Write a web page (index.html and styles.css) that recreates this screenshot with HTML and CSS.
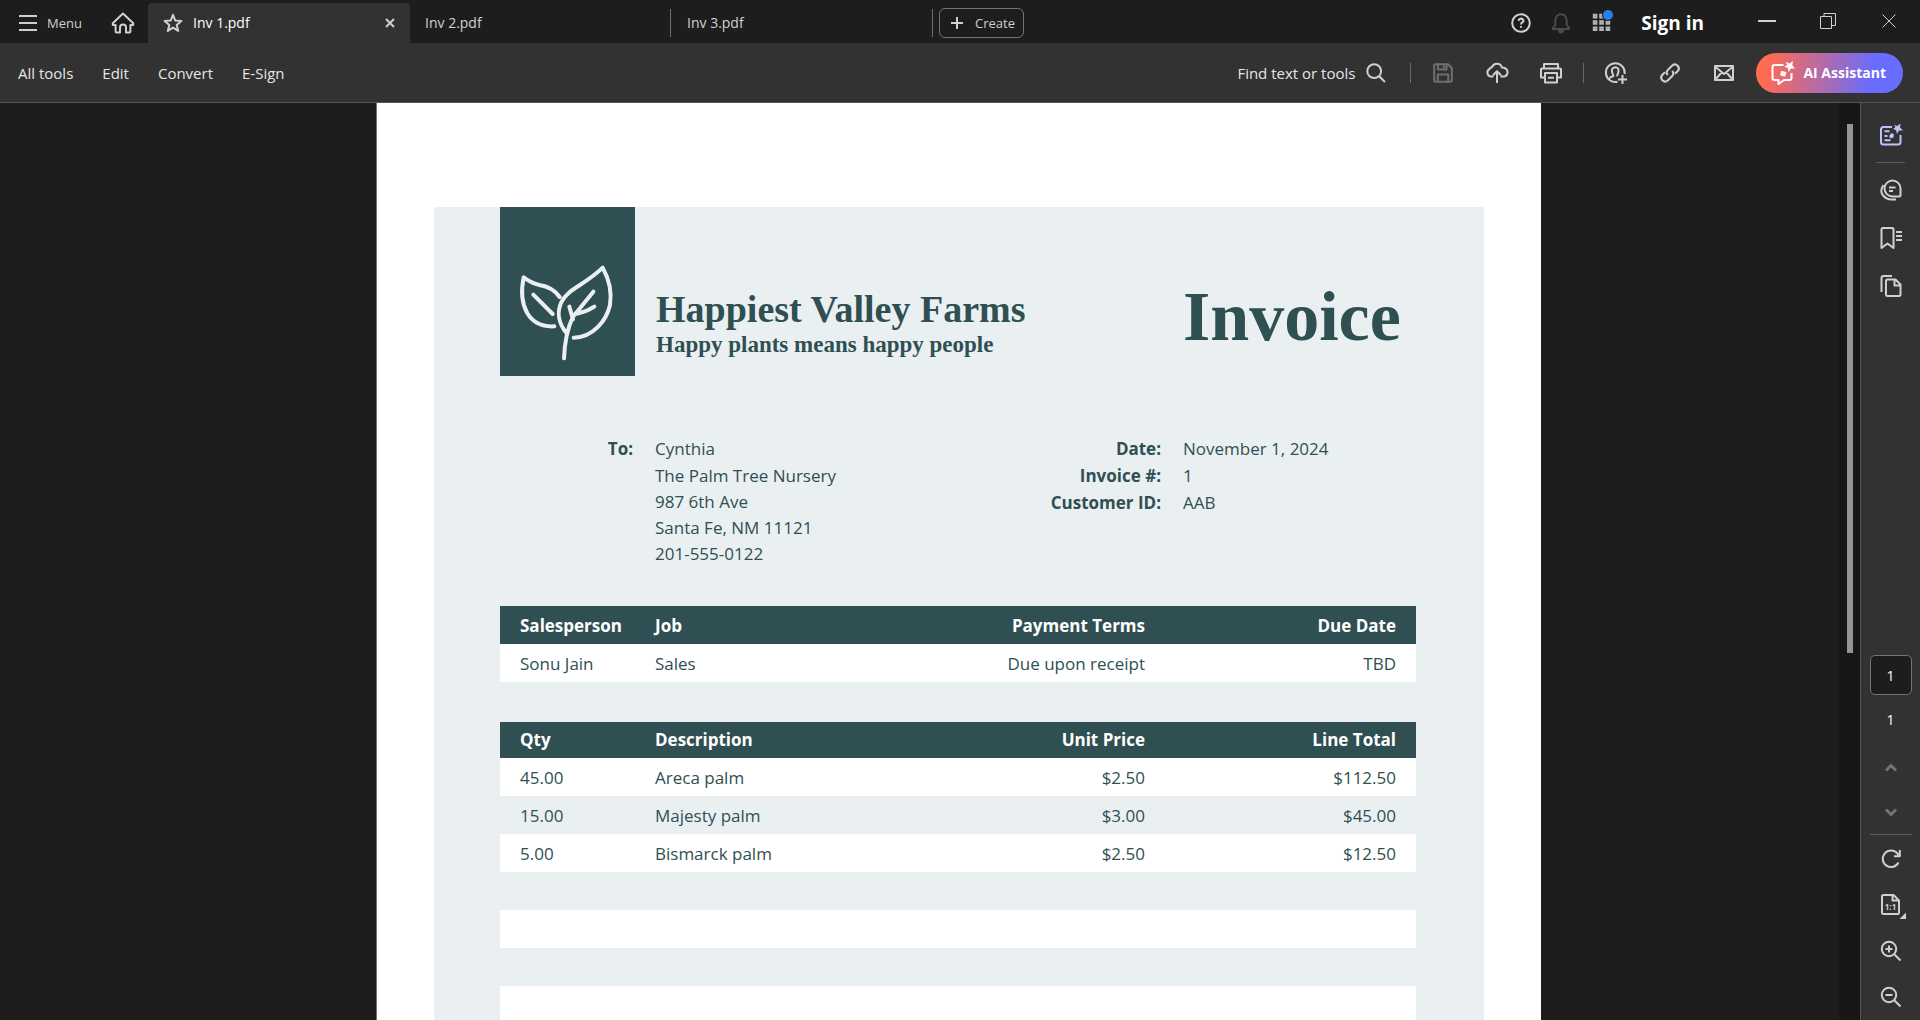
FILE: index.html
```html
<!DOCTYPE html>
<html lang="en">
<head>
<meta charset="utf-8">
<meta name="viewport" content="width=device-width, initial-scale=1">
<title>Inv 1.pdf</title>
<link rel="stylesheet" href="styles.css">
</head>
<body>
<div class="app">
  <header class="titlebar">
    <button class="menu-btn" type="button">
      <svg class="menu-icon" width="18" height="18" viewBox="0 0 18 18"><path d="M0 2h18M0 9h18M0 16h18"/></svg>
      <span>Menu</span>
    </button>
    <button class="home-btn" type="button" aria-label="Home">
      <svg width="24" height="24" viewBox="0 0 24 24"><path d="M12 2.600 1.800 12.200V14H4.600V20.400Q4.600 21.400 5.600 21.400H9V16.600A3 3 0 0 1 15 16.600V21.400H18.400Q19.400 21.400 19.400 20.400V14H22.200V12.200Z"/></svg>
    </button>
    <nav class="tabs" aria-label="Open documents">
      <div class="tab tab-active">
        <button class="tab-star" type="button" aria-label="Star this file">
          <svg width="20" height="20" viewBox="0 0 20 20"><path d="M10 1.900 12.300 7.600 18.400 8 13.700 11.900 15.200 17.900 10 14.600 4.800 17.900 6.300 11.900 1.600 8 7.700 7.600Z"/></svg>
        </button>
        <button class="tab-name" type="button">Inv 1.pdf</button>
        <button class="tab-close" type="button" aria-label="Close tab">
          <svg width="10" height="10" viewBox="0 0 10 10"><path d="M1 1 9 9M9 1 1 9"/></svg>
        </button>
      </div>
      <div class="tab"><button class="tab-name" type="button">Inv 2.pdf</button></div>
      <div class="tab"><button class="tab-name" type="button">Inv 3.pdf</button></div>
    </nav>
    <button class="create-btn" type="button">
      <svg width="12" height="12" viewBox="0 0 12 12"><path d="M6 0V12M0 6H12"/></svg>
      <span>Create</span>
    </button>
    <div class="account">
      <button class="icon-btn" type="button" aria-label="Help">
        <svg width="20" height="20" viewBox="0 0 20 20"><circle cx="10" cy="10" r="8.800"/><path d="M7.800 7.900A2.300 2 0 1 1 11.200 9.400Q10 10.100 10 11.400M10 13.100V14.700"/></svg>
      </button>
      <button class="icon-btn dim" type="button" aria-label="Notifications">
        <svg width="20" height="22" viewBox="0 0 20 22"><path d="M10 1.500V2.500M2 17V16L4.300 13V8A5.700 5.700 0 0 1 15.700 8V13L18 16V17ZM8 18.500A2 2 0 0 0 12 18.500Z"/></svg>
      </button>
      <button class="icon-btn apps-btn" type="button" aria-label="Apps">
        <svg width="22" height="22" viewBox="0 0 22 22"><path d="M2.800 4.800h2.600v2.600H2.800zM9.200 4.800h2.600v2.600H9.200zM2.800 11.200h2.600v2.600H2.800zM9.200 11.200h2.600v2.600H9.200zM15.600 11.200h2.600v2.600H15.600zM2.800 17.400h2.600v2.600H2.800zM9.200 17.400h2.600v2.600H9.200zM15.600 17.400h2.600v2.600H15.600z"/><circle class="apps-gap" cx="17" cy="5" r="6"/><circle class="apps-dot" cx="17" cy="5" r="5"/></svg>
      </button>
      <a class="signin" href="#signin">Sign in</a>
    </div>
    <div class="window-controls">
      <button type="button" aria-label="Minimize"><svg width="18" height="18" viewBox="0 0 18 18"><path class="heavy" d="M0 9H18"/></svg></button>
      <button type="button" aria-label="Restore"><svg width="18" height="18" viewBox="0 0 18 18"><path d="M1.500 4.500H12.500V16.500H1.500ZM5 4.500V1.500H16.500V13.500H12.500"/></svg></button>
      <button type="button" aria-label="Close"><svg width="18" height="18" viewBox="0 0 18 18"><path d="M2.500 2.500 15.500 15.500M15.500 2.500 2.500 15.500"/></svg></button>
    </div>
  </header>

  <div class="toolbar">
    <nav class="tools">
      <button type="button">All tools</button>
      <button type="button">Edit</button>
      <button type="button">Convert</button>
      <button type="button">E-Sign</button>
    </nav>
    <div class="actions">
      <button class="find-btn" type="button">
        <span>Find text or tools</span>
        <svg width="20" height="20" viewBox="0 0 20 20"><circle cx="8.200" cy="8.200" r="6.900"/><path d="M13.200 13.200 19 19"/></svg>
      </button>
      <span class="rule"></span>
      <div class="action-group">
        <button class="icon-btn faded" type="button" aria-label="Save">
          <svg width="22" height="22" viewBox="0 0 22 22"><path d="M3 2.200H16L19.800 6V18.300Q19.800 19.800 18.300 19.800H3.700Q2.200 19.800 2.200 18.300V3.700Q2.200 2.200 3.700 2.200M6 2.500V7.500H14.500V2.500M5.800 19.500V12.500H16.200V19.500M11.800 3.500V6"/></svg>
        </button>
        <button class="icon-btn" type="button" aria-label="Upload">
          <svg width="24" height="24" viewBox="0 0 24 24"><path d="M8.500 15.500H5.600A4 4 0 0 1 4.600 8Q5 6 7 6.200A5.300 5.300 0 0 1 17 6.600Q22.600 7 22.600 11.500 22 15.500 18.500 15.500H15.500M12 22V10.500M8 14.300 12 10.200 16 14.300"/></svg>
        </button>
        <button class="icon-btn" type="button" aria-label="Print">
          <svg width="24" height="24" viewBox="0 0 24 24"><path d="M5 7V3H19V7M5.500 16.500H2V8.500Q2 7.500 3 7.500H21Q22 7.500 22 8.500V16.500H18.500M6 12H18V21.500H6ZM9 16.800H15" /></svg>
        </button>
      </div>
      <span class="rule"></span>
      <div class="action-group">
        <button class="icon-btn" type="button" aria-label="Share">
          <svg width="24" height="24" viewBox="0 0 24 24"><path d="M13.500 20.700A9.400 9.400 0 1 1 20.600 13M6 17.500Q6 15.800 9.300 15.300 9.600 14 8.500 12.500 6.500 6.500 11.300 6.200 16 6.500 14 12.500 13 14 13.200 15.300M18.500 14V23M14 18.500H23"/></svg>
        </button>
        <button class="icon-btn" type="button" aria-label="Copy link">
          <svg width="24" height="24" viewBox="0 0 24 24"><path d="M9.800 14.200A4 4 0 0 1 10 8.800L14.300 4.500A3.900 3.900 0 0 1 19.800 10L17 12.800M14.200 9.800A4 4 0 0 1 14 15.200L9.700 19.500A3.900 3.900 0 0 1 4.200 14L7 11.200"/></svg>
        </button>
        <button class="icon-btn" type="button" aria-label="Send by email">
          <svg width="22" height="20" viewBox="0 0 22 20"><path d="M2 3H20V17H2ZM2 3.500 11 11 20 3.500M2.500 16.500 8.500 9.500M19.500 16.500 13.500 9.500"/></svg>
        </button>
      </div>
      <button class="ai-btn" type="button">
        <svg width="24" height="24" viewBox="0 0 24 24"><path d="M12.500 4H3.500Q1.500 4 1.500 6V17Q1.500 19 3.500 19H7.500V23L13 19H18.500Q20.500 19 20.500 17V12"/><path class="solid" d="M14.500 0.800 18.500 2.400 22 0 21.300 4.200 24 7.500 20 7.500 17.600 11 16.800 7 13.200 5.600 16.300 3.900ZM10.500 9.700 15.500 11.300 13.900 15.800 9 14.200Z"/></svg>
        <span>AI Assistant</span>
      </button>
    </div>
  </div>

  <div class="workspace">
    <main class="viewer">
      <article class="sheet">
        <div class="invoice">
          <header class="brand">
            <div class="logo">
              <svg width="135" height="169" viewBox="30 21 405 507"><path d="M209 291C193 268 168 258 148 255Q120 248 101 232C92 275 98 315 112 340C130 370 158 381 193 379M130 284 188 342M230 400C205 370 200 335 215 305C235 265 285 255 338 203C356 235 366 275 360 315C350 360 310 412 251 413M222 475Q225 400 249 350L310 275M249 358 238 320M262 341Q290 335 313 320"/></svg>
            </div>
            <div class="company">
              <h1>Happiest Valley Farms</h1>
              <p>Happy plants means happy people</p>
            </div>
            <h2 class="doc-title">Invoice</h2>
          </header>

          <section class="details">
            <strong class="label">To:</strong>
            <address>
              <p class="row">Cynthia</p>
              <p class="row">The Palm Tree Nursery</p>
              <p>987 6th Ave</p>
              <p>Santa Fe, NM 11121</p>
              <p>201-555-0122</p>
            </address>
            <dl>
              <dt>Date:</dt><dd>November 1, 2024</dd>
              <dt>Invoice #:</dt><dd>1</dd>
              <dt>Customer ID:</dt><dd>AAB</dd>
            </dl>
          </section>

          <table class="grid terms">
            <colgroup><col class="c1"><col class="c2"><col class="c3"><col class="c4"></colgroup>
            <thead><tr><th>Salesperson</th><th>Job</th><th class="num">Payment Terms</th><th class="num">Due Date</th></tr></thead>
            <tbody><tr><td>Sonu Jain</td><td>Sales</td><td class="num">Due upon receipt</td><td class="num">TBD</td></tr></tbody>
          </table>

          <table class="grid items">
            <colgroup><col class="c1"><col class="c2"><col class="c3"><col class="c4"></colgroup>
            <thead><tr><th>Qty</th><th>Description</th><th class="num">Unit Price</th><th class="num">Line Total</th></tr></thead>
            <tbody>
              <tr><td>45.00</td><td>Areca palm</td><td class="num">$2.50</td><td class="num">$112.50</td></tr>
              <tr><td>15.00</td><td>Majesty palm</td><td class="num">$3.00</td><td class="num">$45.00</td></tr>
              <tr><td>5.00</td><td>Bismarck palm</td><td class="num">$2.50</td><td class="num">$12.50</td></tr>
              <tr><td></td><td></td><td></td><td></td></tr>
              <tr><td></td><td></td><td></td><td></td></tr>
              <tr><td></td><td></td><td></td><td></td></tr>
              <tr><td></td><td></td><td></td><td></td></tr>
            </tbody>
          </table>
        </div>
      </article>
    </main>
    <div class="scrollbar"><div class="thumb"></div></div>

    <aside class="rail">
      <div class="rail-top">
        <button class="icon-btn ai-panel" type="button" aria-label="Generative summary">
          <svg width="24" height="24" viewBox="0 0 24 24"><path d="M13 4H4.500Q2 4 2 6.500V19Q2 21.500 4.500 21.500H19Q21.500 21.500 21.500 19V12M5.500 8.300H10.500M5.500 13H8.500M5.500 17.300H11.500"/><path class="solid" d="M15 1.500 18 3 21.500 0.500 21 4.500 24 7.500 20 7.500 18 11 17 7 14 6 16.500 4ZM12.500 10 15 11.500 14.500 14.500 11.500 15.500 10 13Z"/></svg>
        </button>
        <hr>
        <button class="icon-btn" type="button" aria-label="Comments">
          <svg width="24" height="24" viewBox="0 0 24 24"><path d="M21.500 17V10.500A8 8 0 1 0 13.500 18.500H20Q21.500 18.500 21.500 17M10 9.500H16.500M10 13H14M4.500 7Q0 13.500 4.500 18 8 21.500 12 21.500H17"/></svg>
        </button>
        <button class="icon-btn" type="button" aria-label="Bookmarks">
          <svg width="24" height="24" viewBox="0 0 24 24"><path d="M2.500 3.500Q2.500 2 4 2H13Q14.500 2 14.500 3.500V22L8.500 17.500 2.500 22ZM17 6H23M17 10H23M17 14H23"/></svg>
        </button>
        <button class="icon-btn" type="button" aria-label="Page thumbnails">
          <svg width="24" height="24" viewBox="0 0 24 24"><path d="M2.500 18V4Q2.500 2 4.500 2H13M8.500 5.500H16.500L21.500 10.500V20.500Q21.500 22 20 22H8.500Q7 22 7 20.500V7Q7 5.500 8.500 5.500M15.500 6V11.500H21"/></svg>
        </button>
      </div>
      <div class="rail-bottom">
        <input class="page-box" type="text" value="1" aria-label="Current page">
        <span class="page-count">1</span>
        <button class="icon-btn chevron" type="button" aria-label="Previous page"><svg width="14" height="10" viewBox="0 0 14 10"><path d="M2 7.500 7 2.500 12 7.500"/></svg></button>
        <button class="icon-btn chevron" type="button" aria-label="Next page"><svg width="14" height="10" viewBox="0 0 14 10"><path d="M2 2.500 7 7.500 12 2.500"/></svg></button>
        <hr>
        <button class="icon-btn" type="button" aria-label="Rotate">
          <svg width="22" height="22" viewBox="0 0 22 22"><path d="M18.500 14.500A8.300 8.300 0 1 1 17.300 5.300L19.500 8M14 8.200H19.800V2"/></svg>
        </button>
        <button class="icon-btn" type="button" aria-label="Actual size">
          <svg width="32" height="28" viewBox="0 0 32 28"><path d="M8.500 4H18.500L24 9.500V21.500Q24 23 22.500 23H8.500Q7 23 7 21.500V5.500Q7 4 8.500 4M17.500 4.500V9.500H23.500"/><path class="solid" d="M31 21.500V28H24.500Z"/><text x="15.500" y="19" text-anchor="middle">1:1</text></svg>
        </button>
        <button class="icon-btn" type="button" aria-label="Zoom in">
          <svg width="22" height="22" viewBox="0 0 22 22"><circle cx="9" cy="9" r="7.200"/><path d="M14.500 14.500 20.500 20.500M5.500 9H12.500M9 5.500V12.500"/></svg>
        </button>
        <button class="icon-btn" type="button" aria-label="Zoom out">
          <svg width="22" height="22" viewBox="0 0 22 22"><circle cx="9" cy="9" r="7.200"/><path d="M14.500 14.500 20.500 20.500M5.500 9H12.500"/></svg>
        </button>
      </div>
    </aside>
  </div>
</div>
</body>
</html>
```
FILE: styles.css
```css
:root {
  --teal: #2f4f52;
  --mist: #eaf0f2;
  --bar: #323232;
  --dark: #1d1d1d;
  --icon: #d0d0d0;
}

* { box-sizing: border-box; }

body {
  margin: 0;
  background: var(--dark);
  color: #e6e6e6;
  font: 14px/20px "Open Sans", "Noto Sans", sans-serif;
}

button {
  margin: 0;
  padding: 0;
  border: 0;
  background: none;
  color: inherit;
  font: inherit;
}

svg {
  display: block;
  flex: none;
  fill: none;
  stroke: var(--icon);
  stroke-width: 2;
  stroke-linejoin: round;
}

svg .solid { fill: var(--icon); stroke: none; }

.app {
  display: flex;
  flex-direction: column;
  height: 100vh;
  overflow: hidden;
}

/* Title bar */
.titlebar {
  display: flex;
  align-items: center;
  flex: none;
  height: 43px;
  padding: 2px 0 0 19px;
  color: #d0d0d0;
}

.menu-btn {
  display: flex;
  align-items: center;
  gap: 10px;
  width: 92px;
  font-size: 13px;
}

.home-btn { width: 37px; }

.tabs {
  display: flex;
  align-self: stretch;
  padding-top: 1px;
}

.tab {
  display: flex;
  align-items: center;
  width: 262px;
  padding: 0 15px;
  background: linear-gradient(#6e6e6e, #6e6e6e) calc(100% - 1px) 6px / 1px 28px no-repeat;
}

.tab-active {
  gap: 10px;
  background: var(--bar);
  border-radius: 4px 4px 0 0;
  color: #fff;
}

.tab-close { margin-left: auto; }

.create-btn {
  display: flex;
  align-items: center;
  gap: 12px;
  height: 30px;
  margin-left: 5px;
  padding: 0 8px 0 11px;
  border: 1px solid #747474;
  border-radius: 6px;
  font-size: 13px;
}

.account {
  display: flex;
  align-items: center;
  gap: 20px;
  margin-left: auto;
}

.icon-btn {
  display: flex;
  align-items: center;
  justify-content: center;
}

.dim svg { stroke: #4b4b4b; }
.apps-btn svg { stroke: #b5b5b5; stroke-linejoin: miter; margin-top: -4px; }
.apps-btn .apps-gap { fill: var(--dark); stroke: none; }
.apps-btn .apps-dot { fill: #2680eb; stroke: none; }

.signin {
  margin-left: 8px;
  color: #fff;
  font-size: 19px;
  font-weight: 700;
  line-height: 24px;
  text-decoration: none;
}

.window-controls {
  display: flex;
  gap: 43px;
  align-self: flex-start;
  margin: 10px 22px 0 54px;
}

.window-controls svg { stroke-width: 1; stroke-linejoin: miter; }
.window-controls .heavy { stroke-width: 2; }

/* Toolbar */
.toolbar {
  display: flex;
  align-items: center;
  justify-content: space-between;
  flex: none;
  height: 60px;
  padding: 0 17px 0 18px;
  background: var(--bar);
  border-bottom: 1px solid #555;
}

.tools { display: flex; gap: 29px; font-size: 15px; }
.actions { display: flex; align-items: center; }

.find-btn {
  display: flex;
  align-items: center;
  gap: 11px;
  margin-right: 24px;
  font-size: 15px;
}

.rule { width: 1px; height: 20px; background: #6a6a6a; }

.action-group {
  display: flex;
  gap: 20px;
  padding: 0 15px;
}

.action-group .icon-btn { width: 34px; }
.faded svg { stroke: #707070; }

.ai-btn {
  display: flex;
  align-items: center;
  gap: 8px;
  height: 40px;
  padding: 0 17px 0 15px;
  border-radius: 20px;
  background: linear-gradient(100deg, #ff6b53 8%, #b46aa8 45%, #686dff 78%);
  color: #fff;
  font-weight: 700;
}

.ai-btn svg { stroke: #fff; }
.ai-btn .solid { fill: #fff; }

/* Document area */
.workspace {
  display: flex;
  flex: 1;
  min-height: 0;
}

.viewer {
  display: flex;
  flex: 1;
  justify-content: center;
  align-items: flex-start;
  min-width: 0;
  padding-left: 78px;
  overflow: hidden;
}

.sheet {
  flex: none;
  width: 1165px;
  padding: 104px 57px;
  border-left: 1px solid #747474;
  background: #fff;
  color: var(--teal);
  font-size: 17px;
  line-height: 26px;
}

.invoice {
  padding: 0 68px 160px 66px;
  background: var(--mist);
}

.brand { display: flex; height: 169px; }

.logo {
  flex: none;
  width: 135px;
  background: var(--teal);
}

.logo svg { stroke: var(--mist); stroke-width: 12; stroke-linecap: round; }

.company {
  flex: 1;
  padding: 80px 0 0 21px;
  font-family: "Liberation Serif", serif;
  font-weight: 700;
}

.company h1 { margin: 0; font-size: 38px; line-height: 44px; }
.company p { margin: 0; font-size: 23px; line-height: 28px; }

.doc-title {
  width: 233px;
  margin: 68px 0 0;
  font: 700 70px/84px "Liberation Serif", serif;
}

.details {
  display: flex;
  margin-top: 59px;
}

.label { width: 135px; padding-right: 2px; text-align: right; line-height: 27px; }
.details address { flex: 1; padding-left: 20px; font-style: normal; }
.details p { margin: 0; }
.details p.row { line-height: 27px; }

.details dl {
  display: grid;
  grid-template-columns: auto 233px;
  column-gap: 22px;
  margin: 0;
  line-height: 27px;
  align-content: start;
}

.details dt { font-weight: 700; text-align: right; }
.details dd { margin: 0; }

.grid {
  width: 100%;
  border-collapse: collapse;
  table-layout: fixed;
}

.grid .c1 { width: 135px; }
.grid .c3 { width: 265px; }
.grid .c4 { width: 251px; }
.grid th, .grid td { height: 38px; padding: 2px 20px 0; text-align: left; }
.grid th { background: var(--teal); color: #fff; font-weight: 700; }
.grid .num { text-align: right; }
.grid tbody tr:nth-child(odd) { background: #fff; }
.terms { margin-top: 39px; }
.items { margin-top: 40px; }
.grid.items th { height: 36px; padding-top: 0; }

/* Scrollbar */
.scrollbar {
  flex: none;
  width: 21px;
  padding: 21px 7px 0 8px;
  background: #171717;
}

.thumb { height: 59%; background: #959595; }

/* Right rail */
.rail {
  display: flex;
  flex-direction: column;
  justify-content: space-between;
  flex: none;
  width: 60px;
  padding-top: 15px;
  border-left: 1px solid #555;
  background: var(--bar);
}

.rail hr { width: 42px; margin: 0; border: 0; border-top: 1px solid #5c5c5c; }

.rail-top,
.rail-bottom {
  display: flex;
  flex-direction: column;
  align-items: center;
}

.rail-top .icon-btn { height: 34px; margin-bottom: 14px; }
.rail .rail-top hr { width: 29px; margin: -4px 0 10px; }
.ai-panel svg { stroke: #c0bfff; }
.ai-panel .solid { fill: #c0bfff; }

.page-box {
  width: 42px;
  height: 40px;
  padding: 0;
  border: 1px solid #747474;
  border-radius: 5px;
  background: var(--dark);
  color: #fff;
  font: inherit;
  text-align: center;
}

.page-count { margin: 15px 0 16px; color: #fff; }
.chevron { height: 44px; }
.chevron svg { stroke: #747474; stroke-width: 3; }
.rail-bottom .icon-btn:not(.chevron) { height: 46px; }
.rail-bottom hr + .icon-btn { margin-top: 1px; }
.rail-bottom text {
  fill: var(--icon);
  stroke: none;
  font: 700 8px "Open Sans", sans-serif;
}
```
